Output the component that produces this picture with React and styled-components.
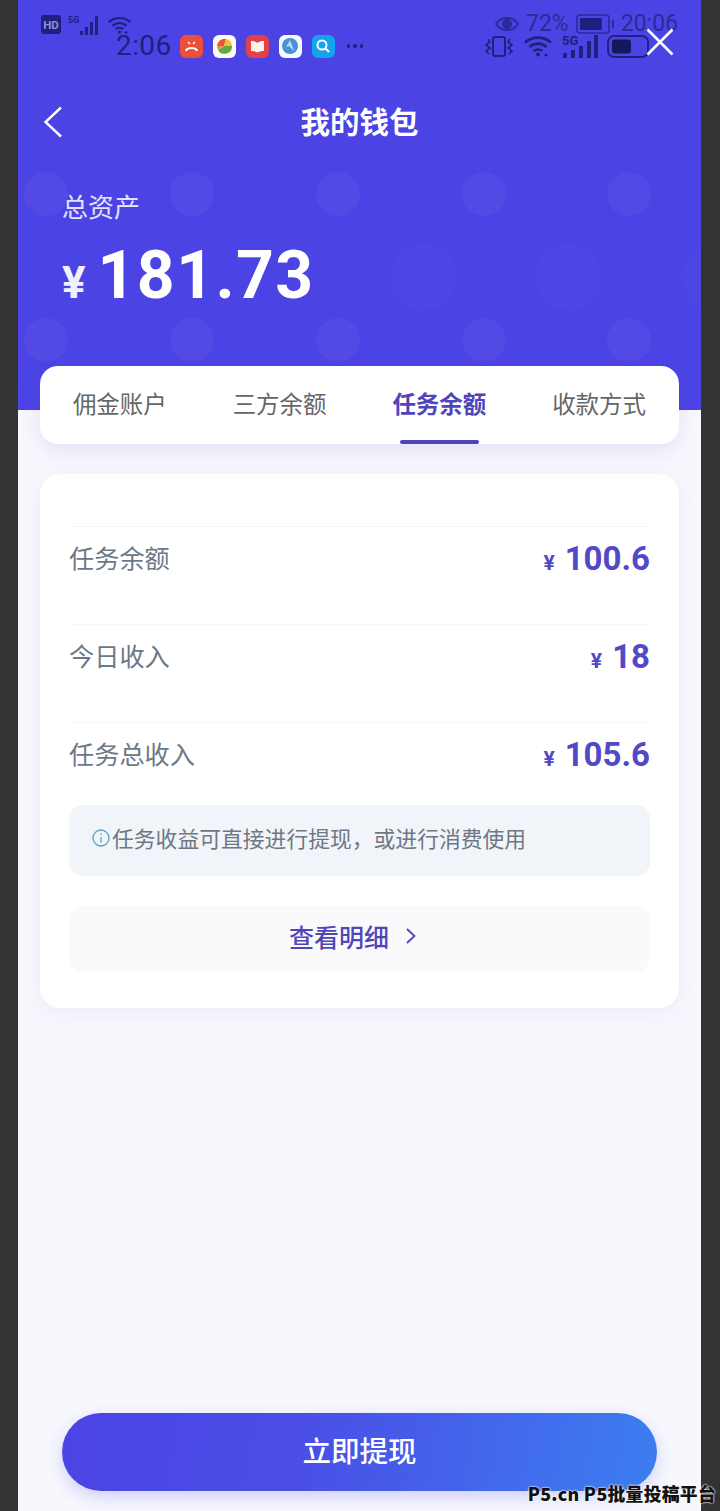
import React from 'react';
import styled, { createGlobalStyle } from 'styled-components';

const GlobalStyle = createGlobalStyle`
  html, body {
    margin: 0;
    padding: 0;
    background: #333333;
  }
  * {
    box-sizing: border-box;
  }
`;

const Page = styled.div`
  position: relative;
  width: 720px;
  height: 1511px;
  padding-left: 18px;
  overflow: hidden;
  background: #333333;
  font-family: "Noto Sans CJK SC", "Noto Sans", sans-serif;
`;

const Phone = styled.div`
  position: relative;
  width: 683px;
  height: 1511px;
  display: flex;
  flex-direction: column;
  background: #f7f7fe;
`;

const Header = styled.header`
  position: relative;
  height: 410px;
  flex: none;
  padding: 96px 0 0 44px;
  background: #4c43e5;
  overflow: hidden;
`;

const Dots = styled.svg`
  position: absolute;
  left: 0;
  top: 0;
`;

const TitleRow = styled.div`
  position: relative;
  height: 48px;
  margin-left: -44px;
  display: flex;
  align-items: center;
  justify-content: center;
`;

const BackIcon = styled.svg`
  position: absolute;
  left: 25px;
  top: 10px;
`;

const Title = styled.h1`
  margin: 0;
  font-size: 29.5px;
  line-height: 48px;
  font-weight: 700;
  color: #ffffff;
`;

const AssetLabel = styled.div`
  position: relative;
  margin-top: 43px;
  font-size: 26px;
  line-height: 38px;
  color: #e3e2fb;
`;

const AssetAmount = styled.div`
  position: relative;
  margin-top: 11px;
  display: flex;
  align-items: baseline;
  gap: 12px;
  color: #ffffff;
  font-family: Roboto, "Liberation Sans", sans-serif;
  font-weight: 700;
`;

const AssetYen = styled.span`
  font-size: 44px;
  color: #f1f0fd;
`;

const AssetValue = styled.span`
  font-size: 66px;
  line-height: 80px;
  letter-spacing: 1.4px;
`;

const Tabs = styled.nav`
  position: relative;
  height: 78px;
  margin: -44px 22px 0;
  display: grid;
  grid-template-columns: repeat(4, 1fr);
  background: #ffffff;
  border-radius: 18px;
  box-shadow: 0 6px 20px rgba(90, 90, 170, 0.13);
`;

const Tab = styled.div`
  position: relative;
  display: flex;
  align-items: flex-start;
  justify-content: center;
  padding-top: 20px;
  font-size: 23.5px;
  line-height: 34px;
  font-weight: ${p => (p.$active ? 700 : 400)};
  color: ${p => (p.$active ? '#4f45bb' : '#666666')};
`;

const TabLine = styled.span`
  position: absolute;
  left: 40px;
  right: 40px;
  bottom: 0;
  height: 4px;
  border-radius: 2px;
  background: #4f45bb;
`;

const Card = styled.section`
  height: 534px;
  margin: 30px 22px 0;
  padding: 52px 29px 0;
  background: #ffffff;
  border-radius: 20px;
  box-shadow: 0 4px 20px rgba(90, 90, 170, 0.07);
`;

const Row = styled.div`
  height: 75px;
  margin-bottom: 23px;
  padding-bottom: 10px;
  display: flex;
  align-items: center;
  justify-content: space-between;
  border-top: 1px solid #f5f6f8;
  border-bottom: 1px solid ${p => (p.$last ? 'transparent' : '#fcfcfd')};
`;

const RowLabel = styled.span`
  margin-bottom: 4px;
  font-size: 25.2px;
  color: #6c7888;
`;

const RowAmount = styled.span`
  display: flex;
  align-items: baseline;
  gap: 10px;
  font-family: Roboto, "Noto Sans", sans-serif;
  font-weight: 700;
  color: #5149c6;
`;

const RowYen = styled.span`
  font-size: 21px;
`;

const RowValue = styled.span`
  font-size: 33px;
  line-height: 40px;
`;

const Notice = styled.div`
  height: 71px;
  margin-top: -15px;
  padding: 0 0 6px 23px;
  display: flex;
  align-items: center;
  gap: 2px;
  font-size: 21.8px;
  color: #6e7884;
  background: #f1f4f9;
  border-radius: 14px;
`;

const DetailButton = styled.div`
  height: 66px;
  margin-top: 30px;
  padding: 0 13px 6px 0;
  display: flex;
  align-items: center;
  justify-content: center;
  gap: 16px;
  font-size: 25px;
  font-weight: 500;
  color: #5046b6;
  background: #fafafd;
  border-radius: 14px;
`;

const Footer = styled.div`
  margin-top: auto;
  padding: 0 44px 20px;
`;

const Withdraw = styled.button`
  width: 595px;
  height: 78px;
  padding: 0 0 6px;
  border: 0;
  border-radius: 39px;
  font-family: inherit;
  font-size: 28.5px;
  font-weight: 500;
  color: #ffffff;
  background: linear-gradient(100deg, #4a44e4 0%, #4a4ee6 40%, #3c7ef0 100%);
  box-shadow: 0 6px 16px rgba(76, 70, 228, 0.22);
`;

const StatusLeft = styled.div`
  position: absolute;
  left: 23px;
  top: 13px;
  display: flex;
  flex-direction: column;
  color: #20207e;
`;

const StatusRight = styled.div`
  position: absolute;
  right: 23px;
  top: 12px;
  display: flex;
  flex-direction: column;
  align-items: flex-end;
  color: #20207e;
`;

const StatusLine = styled.div`
  display: flex;
  align-items: center;
  height: ${p => p.$height}px;
  gap: ${p => p.$gap}px;
`;

const StatusSecond = styled(StatusLine)`
  padding-left: 75px;
  margin-top: -3px;
`;

const RightSecond = styled(StatusLine)`
  margin-top: -1px;
  margin-right: -1px;
  padding-right: 30px;
`;

const ClockText = styled.span`
  font-family: Roboto, sans-serif;
  font-size: 28px;
  line-height: 26px;
  margin-right: -2px;
  letter-spacing: 0.4px;
`;

const StatusText = styled.span`
  font-family: Roboto, sans-serif;
  font-size: 23px;
  line-height: 24px;
  color: #2c2a98;
`;

const AppIcon = styled.span`
  width: 23px;
  height: 23px;
  flex: none;
  display: flex;
  align-items: center;
  justify-content: center;
  border-radius: 6px;
  background: ${p => p.$bg};
`;

const MoreDots = styled.span`
  margin-left: 2px;
  display: flex;
  gap: 3px;
`;

const MoreDot = styled.i`
  width: 3.5px;
  height: 3.5px;
  border-radius: 50%;
  background: #20207e;
`;

const CloseIcon = styled.svg`
  position: absolute;
  left: 628px;
  top: 28px;
`;

const Watermark = styled.div`
  position: absolute;
  right: 4px;
  bottom: 6px;
  font-family: "Noto Sans CJK SC", sans-serif;
  font-size: 17.8px;
  line-height: 24px;
  font-weight: 900;
  color: #111111;
  letter-spacing: 0.3px;
  text-shadow: 0 0 2px #ffffff, 0 0 2px #ffffff;
`;

const dotColumns = [28, 174, 320, 466, 611];

const HeaderDots = () => (
  <Dots width="683" height="410">
    {dotColumns.map(x => (
      <g key={x} fill="#ffffff" fillOpacity="0.04">
        <ellipse cx={x} cy="194" rx="22" ry="22" />
        <ellipse cx={x} cy="340" rx="22" ry="22" />
      </g>
    ))}
    <g fill="#ffffff" fillOpacity="0.015">
      <ellipse cx="405" cy="277" rx="33" ry="33" />
      <ellipse cx="551" cy="277" rx="33" ry="33" />
      <ellipse cx="697" cy="277" rx="33" ry="33" />
    </g>
  </Dots>
);

const HdBadge = () => (
  <svg width="20" height="19" viewBox="0 0 20 19">
    <rect width="20" height="19" rx="3" fill="#20207e" />
    <text x="10" y="14" textAnchor="middle" fontSize="11.5" fontWeight="700" fontFamily="Roboto, sans-serif" fill="#8f8fd6">HD</text>
  </svg>
);

const SignalSmall = () => (
  <svg width="32" height="22" viewBox="0 0 32 22">
    <text x="0" y="9" fontSize="9" fontWeight="700" fontFamily="Roboto, sans-serif" fill="#20207e">5G</text>
    <g fill="#20207e">
      <rect x="12" y="17" width="3" height="4" />
      <rect x="17" y="13" width="3" height="8" />
      <rect x="22" y="8" width="3" height="13" />
      <rect x="27" y="2" width="3" height="19" />
    </g>
  </svg>
);

const WifiIcon = ({ width, height }) => (
  <svg width={width} height={height} viewBox="0 0 30 22" fill="none" stroke="#20207e" strokeWidth="2.6">
    <path d="M2 7.5C9.5 1 20.5 1 28 7.5" />
    <path d="M6.5 12C11.5 7.5 18.5 7.5 23.5 12" />
    <path d="M10.5 16C13 14 17 14 19.5 16" />
    <circle cx="15" cy="19.5" r="2" fill="#20207e" stroke="none" />
    <circle cx="23" cy="20" r="1.6" fill="#20207e" stroke="none" />
  </svg>
);

const EyeIcon = () => (
  <svg width="24" height="18" viewBox="0 0 24 18">
    <path d="M1 9C6 1 18 1 23 9C18 17 6 17 1 9Z" fill="none" stroke="#2c2a98" strokeWidth="2" />
    <circle cx="12" cy="9" r="5" fill="#2c2a98" />
  </svg>
);

const BatteryTop = () => (
  <svg width="38" height="20" viewBox="0 0 38 20">
    <rect x="1" y="1" width="32" height="18" rx="3" fill="none" stroke="#2c2a98" strokeWidth="1.6" />
    <rect x="4" y="4" width="22" height="12" rx="1" fill="#20207e" />
    <rect x="36" y="6" width="2" height="8" fill="#2c2a98" />
  </svg>
);

const VibrateIcon = () => (
  <svg width="30" height="21" viewBox="0 0 30 21" fill="none" stroke="#20207e" strokeWidth="2">
    <rect x="9" y="1" width="12" height="19" rx="2" />
    <path d="M4 3L6 6L2 9L6 12L2 15L5 18" strokeWidth="1.6" />
    <path d="M26 3L24 6L28 9L24 12L28 15L25 18" strokeWidth="1.6" />
  </svg>
);

const SignalLarge = () => (
  <svg width="36" height="24" viewBox="0 0 36 24">
    <text x="0" y="11" fontSize="13" fontWeight="700" fontFamily="Roboto, sans-serif" fill="#20207e">5G</text>
    <g fill="#20207e">
      <rect x="1" y="19" width="4" height="5" />
      <rect x="9" y="16" width="4" height="8" />
      <rect x="17" y="12" width="4" height="12" />
      <rect x="25" y="7" width="4" height="17" />
      <rect x="32" y="1" width="4" height="23" />
    </g>
  </svg>
);

const BatteryBottom = () => (
  <svg width="42" height="23" viewBox="0 0 42 23">
    <rect x="1" y="1" width="40" height="21" rx="6" fill="none" stroke="#20207e" strokeWidth="1.8" />
    <rect x="5" y="4.5" width="19" height="14" rx="3" fill="#17175e" />
  </svg>
);

const App = () => (
  <>
    <GlobalStyle />
    <Page>
      <Phone>
        <Header>
          <HeaderDots />
          <TitleRow>
            <BackIcon width="20" height="32" viewBox="0 0 20 32" fill="none" stroke="#ffffff" strokeWidth="2.4">
              <path d="M18 1.5L2.5 16L18 30.5" />
            </BackIcon>
            <Title>我的钱包</Title>
          </TitleRow>
          <AssetLabel>总资产</AssetLabel>
          <AssetAmount>
            <AssetYen>¥</AssetYen>
            <AssetValue>181.73</AssetValue>
          </AssetAmount>
        </Header>

        <Tabs>
          <Tab>佣金账户</Tab>
          <Tab>三方余额</Tab>
          <Tab $active>任务余额<TabLine /></Tab>
          <Tab>收款方式</Tab>
        </Tabs>

        <Card>
          <Row>
            <RowLabel>任务余额</RowLabel>
            <RowAmount><RowYen>¥</RowYen><RowValue>100.6</RowValue></RowAmount>
          </Row>
          <Row>
            <RowLabel>今日收入</RowLabel>
            <RowAmount><RowYen>¥</RowYen><RowValue>18</RowValue></RowAmount>
          </Row>
          <Row $last>
            <RowLabel>任务总收入</RowLabel>
            <RowAmount><RowYen>¥</RowYen><RowValue>105.6</RowValue></RowAmount>
          </Row>
          <Notice>
            <svg width="18" height="18" viewBox="0 0 18 18" fill="none" stroke="#5b9fc4" strokeWidth="1.3">
              <circle cx="9" cy="9" r="8" />
              <path d="M9 8V13.5" />
              <path d="M9 4.5V6" />
            </svg>
            任务收益可直接进行提现，或进行消费使用
          </Notice>
          <DetailButton>
            查看明细
            <svg width="12" height="18" viewBox="0 0 12 18" fill="none" stroke="#5046b6" strokeWidth="1.8">
              <path d="M2 2L9.5 9L2 16" />
            </svg>
          </DetailButton>
        </Card>

        <Footer>
          <Withdraw>立即提现</Withdraw>
        </Footer>

        <StatusLeft>
          <StatusLine $height={23} $gap={7}>
            <HdBadge />
            <SignalSmall />
            <WifiIcon width={25} height={20} />
          </StatusLine>
          <StatusSecond $height={26} $gap={10}>
            <ClockText>2:06</ClockText>
            <AppIcon $bg="#ee4f3a">
              <svg width="15" height="13" viewBox="0 0 15 13" fill="none" stroke="#ffffff" strokeWidth="2">
                <path d="M2 11C3 7 12 7 13 11" />
                <path d="M4 2L6 4M11 2L9 4" strokeWidth="1.5" />
              </svg>
            </AppIcon>
            <AppIcon $bg="#fbfbf8">
              <svg width="17" height="17" viewBox="0 0 17 17">
                <path d="M1 8A7.5 7.5 0 0 1 10 1L8 8Z" fill="#e8553f" />
                <path d="M10 1A7.5 7.5 0 0 1 16 8L8 8Z" fill="#f0c22e" />
                <path d="M16 8A7.5 7.5 0 0 1 2 12L8 8Z" fill="#5eaa48" />
                <path d="M1 8A7.5 7.5 0 0 0 2 12L8 8Z" fill="#e89a32" />
              </svg>
            </AppIcon>
            <AppIcon $bg="#e2404a">
              <svg width="15" height="13" viewBox="0 0 15 13">
                <path d="M1 1C4 1 6 1.5 7.5 3C9 1.5 11 1 14 1V11C11 11 9 11.5 7.5 12.5C6 11.5 4 11 1 11Z" fill="#fdf3ea" />
              </svg>
            </AppIcon>
            <AppIcon $bg="#f6fbff">
              <svg width="18" height="18" viewBox="0 0 18 18">
                <circle cx="9" cy="9" r="8" fill="#4a90d6" />
                <path d="M9 3L13 14L8 9L5 10Z" fill="#b9dcf5" />
              </svg>
            </AppIcon>
            <AppIcon $bg="#12a5ee">
              <svg width="16" height="16" viewBox="0 0 16 16" fill="none" stroke="#ffffff" strokeWidth="2">
                <circle cx="7" cy="7" r="4.5" />
                <path d="M10.5 10.5L14 14" />
              </svg>
            </AppIcon>
            <MoreDots><MoreDot /><MoreDot /><MoreDot /></MoreDots>
          </StatusSecond>
        </StatusLeft>

        <StatusRight>
          <StatusLine $height={23} $gap={7}>
            <EyeIcon />
            <StatusText>72%</StatusText>
            <BatteryTop />
            <StatusText>20:06</StatusText>
          </StatusLine>
          <RightSecond $height={24} $gap={9}>
            <VibrateIcon />
            <WifiIcon width={30} height={22} />
            <SignalLarge />
            <BatteryBottom />
          </RightSecond>
        </StatusRight>

        <CloseIcon width="28" height="28" viewBox="0 0 28 28" stroke="#ffffff" strokeWidth="2.6" fill="none">
          <path d="M1.5 1.5L26.5 26.5M26.5 1.5L1.5 26.5" />
        </CloseIcon>
      </Phone>
      <Watermark>P5.cn P5批量投稿平台</Watermark>
    </Page>
  </>
);

export default App;
